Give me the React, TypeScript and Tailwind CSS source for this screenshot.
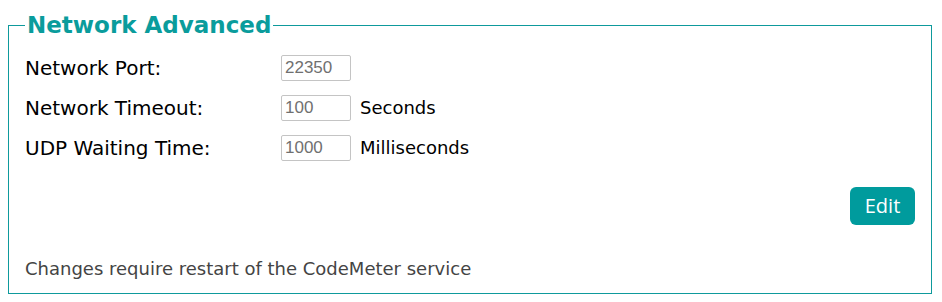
const rows = [
  { label: 'Network Port:', value: '22350', unit: '' },
  { label: 'Network Timeout:', value: '100', unit: 'Seconds' },
  { label: 'UDP Waiting Time:', value: '1000', unit: 'Milliseconds' },
];

export default function App() {
  return (
    <div className="h-[302px] w-[942px] bg-white font-['DejaVu_Sans',sans-serif]">
      <fieldset className="m-2 w-[924px] border border-[#0e9a9c] px-4 pb-[11px] pt-[5px]">
        <legend className="px-0.5 text-[23px] font-bold text-[#0a9c9c]">Network Advanced</legend>

        <div className="flex flex-col">
          {rows.map((r) => (
            <div key={r.label} className="flex h-[40px] items-center">
              <span className="w-[256px] text-[20px] text-black">{r.label}</span>
              <input
                type="text"
                readOnly
                value={r.value}
                className="h-[26px] w-[70px] rounded-[2px] border border-[#c4c4c4] px-[3px] font-['Liberation_Sans',sans-serif] text-[17px] text-[#707070] outline-none"
              />
              {r.unit && <span className="ml-[9px] text-[18px] text-black">{r.unit}</span>}
            </div>
          ))}
        </div>

        <div className="mt-[19px] flex justify-end">
          <button
            type="button"
            className="h-[38px] w-[65px] rounded-[6px] bg-[#009b9d] font-['Open_Sans',sans-serif] text-[20px] text-white"
          >
            Edit
          </button>
        </div>

        <p className="mt-[30px] text-[18px] text-[#444]">Changes require restart of the CodeMeter service</p>
      </fieldset>
    </div>
  );
}
